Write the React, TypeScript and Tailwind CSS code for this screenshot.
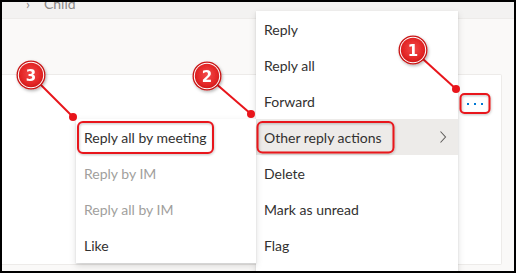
import React from "react";

const mainItems = [
  "Reply",
  "Reply all",
  "Forward",
  "Other reply actions",
  "Delete",
  "Mark as unread",
  "Flag",
];

const subItems: { label: string; disabled?: boolean }[] = [
  { label: "Reply all by meeting" },
  { label: "Reply by IM", disabled: true },
  { label: "Reply all by IM", disabled: true },
  { label: "Like" },
];

function Badge({ cx, cy, n }: { cx: number; cy: number; n: string }) {
  return (
    <g filter="url(#shadow)">
      <circle cx={cx} cy={cy} r={14.5} fill="#c81414" />
      <circle cx={cx} cy={cy} r={13.2} fill="#ffffff" />
      <circle cx={cx} cy={cy} r={12.2} fill="url(#badgeGrad)" />
      <text
        x={cx}
        y={cy + 5.5}
        textAnchor="middle"
        fontFamily="'DejaVu Sans', sans-serif"
        fontWeight="bold"
        fontSize="15"
        fill="#ffffff"
      >
        {n}
      </text>
    </g>
  );
}

export default function App() {
  return (
    <div
      className="relative w-[516px] h-[273px] overflow-hidden border-2 border-black bg-[#faf9f8] flex flex-col"
      style={{ fontFamily: "Lato, 'Noto Sans', sans-serif" }}
    >
      {/* header strip */}
      <div className="h-[17px] bg-[#f3f2f1] overflow-hidden border-b border-[#edebe9]">
        <div className="-mt-[9px] ml-[24px] flex items-center gap-[14px] text-[14px] text-[#8a8886]">
          <span>›</span>
          <span>Child</span>
        </div>
      </div>
      {/* body */}
      <div className="flex-1 flex flex-col pt-[55px] pr-[12px] pb-[6px]">
        <div className="flex-1 bg-white border border-l-0 border-[#edebe9] rounded-r-[2px] relative">
          <div className="absolute left-[465px] top-[28px] flex gap-[5px]">
            <span className="block w-[2px] h-[2px] bg-[#0078d4]" />
            <span className="block w-[2px] h-[2px] bg-[#0078d4]" />
            <span className="block w-[2px] h-[2px] bg-[#0078d4]" />
          </div>
        </div>
      </div>

      {/* main context menu */}
      <div className="absolute left-[254px] top-[9px] w-[202px] h-[280px] bg-white shadow-[0_3px_7px_rgba(0,0,0,0.13),0_0.6px_1.8px_rgba(0,0,0,0.11)] flex flex-col">
        {mainItems.map((label, i) => (
          <div
            key={label}
            className={`h-9 shrink-0 flex items-center justify-between px-2 text-[14px] text-[#323130] ${
              i === 3 ? "bg-[#edebe9]" : ""
            }`}
          >
            <span>{label}</span>
            {i === 3 && (
              <svg width="8" height="14" viewBox="0 0 8 14" className="mr-[3px]">
                <path d="M1.5 1.5 L6.5 7 L1.5 12.5" stroke="#605e5c" strokeWidth="1.1" fill="none" />
              </svg>
            )}
          </div>
        ))}
      </div>

      {/* sub menu */}
      <div className="absolute left-[74px] top-[117px] w-[180px] bg-white shadow-[0_3px_7px_rgba(0,0,0,0.13),0_0.6px_1.8px_rgba(0,0,0,0.11)] flex flex-col">
        {subItems.map((it) => (
          <div
            key={it.label}
            className={`h-9 flex items-center px-2 text-[14px] ${
              it.disabled ? "text-[#a19f9d]" : "text-[#323130]"
            }`}
          >
            {it.label}
          </div>
        ))}
      </div>

      {/* annotations */}
      <svg
        className="absolute -left-[2px] -top-[2px] pointer-events-none"
        width="516"
        height="273"
        viewBox="0 0 516 273"
      >
        <defs>
          <radialGradient id="badgeGrad" cx="50%" cy="45%" r="60%">
            <stop offset="0%" stopColor="#f24a4a" />
            <stop offset="70%" stopColor="#e32626" />
            <stop offset="100%" stopColor="#c91515" />
          </radialGradient>
          <filter id="shadow" x="-50%" y="-50%" width="200%" height="200%">
            <feDropShadow dx="1" dy="1.5" stdDeviation="1.5" floodColor="#000" floodOpacity="0.3" />
          </filter>
          <filter id="rshadow" x="-10%" y="-20%" width="120%" height="140%">
            <feDropShadow dx="0.5" dy="1" stdDeviation="1" floodColor="#000" floodOpacity="0.25" />
          </filter>
        </defs>
        <g fill="none" stroke="#e8151b" strokeWidth="2" filter="url(#rshadow)">
          <rect x="78" y="122" width="135" height="31" rx="5" />
          <rect x="257.5" y="122" width="136" height="30.5" rx="5" />
          <rect x="460.5" y="94" width="29" height="19" rx="4" />
        </g>
        <g stroke="#e8151b" strokeWidth="2">
          <line x1="31" y1="75" x2="73" y2="117" />
          <line x1="207" y1="76" x2="251" y2="114" />
          <line x1="413" y1="50" x2="456" y2="89" />
        </g>
        <g fill="#e8151b">
          <circle cx="73" cy="117" r="4" />
          <circle cx="251" cy="114" r="4" />
          <circle cx="456" cy="89" r="4" />
        </g>
        <Badge cx={31} cy={75} n="3" />
        <Badge cx={207} cy={76} n="2" />
        <Badge cx={413} cy={50} n="1" />
      </svg>
    </div>
  );
}
